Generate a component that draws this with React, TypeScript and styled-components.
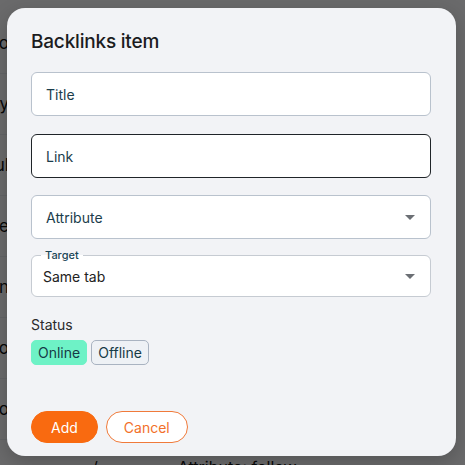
import React from "react";
import styled, { createGlobalStyle } from "styled-components";

const GlobalStyle = createGlobalStyle`
  html, body {
    margin: 0;
    padding: 0;
    width: 465px;
    height: 465px;
    overflow: hidden;
    font-family: Inter, "Noto Sans", Arial, sans-serif;
  }
`;

const bgRows = ["Informatio", "Category", "Consul", "Site", "Domain", "Status to", "Info"];

const App = () => {
  return (
    <>
      <GlobalStyle />
      <Page>
        <BgList>
          {bgRows.map((r) => (
            <BgRow key={r}>
              <BgText>{r}</BgText>
            </BgRow>
          ))}
          <BgFooter>
            <span>/</span>
            <span>Attribute: follow</span>
          </BgFooter>
        </BgList>
        <Overlay>
          <Dialog>
            <Heading>Backlinks item</Heading>
            <Field>
              <Box>
                <Value>Title</Value>
              </Box>
            </Field>
            <Field>
              <Box focused>
                <Value>Link</Value>
              </Box>
            </Field>
            <Field>
              <Box>
                <Value>Attribute</Value>
                <Caret />
              </Box>
            </Field>
            <Box outlined>
              <FloatLabel>Target</FloatLabel>
              <PlainValue>Same tab</PlainValue>
              <Caret />
            </Box>
            <StatusLabel>Status</StatusLabel>
            <Chips>
              <Chip active>Online</Chip>
              <Chip>Offline</Chip>
            </Chips>
            <Actions>
              <PrimaryButton>Add</PrimaryButton>
              <GhostButton>Cancel</GhostButton>
            </Actions>
          </Dialog>
        </Overlay>
      </Page>
    </>
  );
};

const Page = styled.div`
  position: relative;
  width: 465px;
  height: 465px;
  background: #f1f2f4;
  overflow: hidden;
`;

const BgList = styled.div`
  display: flex;
  flex-direction: column;
  padding-top: 13px;
`;

const BgRow = styled.div`
  display: flex;
  align-items: center;
  justify-content: flex-end;
  width: 9px;
  height: 60px;
  overflow: hidden;
  border-bottom: 1px solid #e2e4e8;
`;

const BgText = styled.span`
  font-size: 17px;
  color: #111;
  white-space: nowrap;
`;

const BgFooter = styled.div`
  display: flex;
  gap: 80px;
  padding: 17px 0 0 92px;
  font-size: 16px;
  color: #111;
`;

const Overlay = styled.div`
  position: absolute;
  inset: 0;
  background: rgba(0, 0, 0, 0.56);
  padding: 8px 9px 9px 7px;
  box-sizing: border-box;
`;

const Dialog = styled.div`
  width: 449px;
  height: 448px;
  box-sizing: border-box;
  background: #f2f3f6;
  border-radius: 18px;
  padding: 22px 25px 0 24px;
  display: flex;
  flex-direction: column;
  box-shadow: 0 6px 20px rgba(0, 0, 0, 0.2);
`;

const Heading = styled.h2`
  margin: 0 0 18px;
  font-size: 19px;
  line-height: 24px;
  font-weight: 500;
  color: #1c1c1e;
  letter-spacing: -0.2px;
`;

const Field = styled.div`
  margin-bottom: 17px;

  &:first-of-type {
    margin-bottom: 18px;
  }
`;

const Box = styled.div<{ focused?: boolean; outlined?: boolean }>`
  position: relative;
  height: ${(p) => (p.outlined ? "42px" : "44px")};
  margin-top: ${(p) => (p.outlined ? "-1px" : "0")};
  box-sizing: border-box;
  display: flex;
  align-items: center;
  padding: 0 ${(p) => (p.outlined ? "11px" : "14px")};
  background: #fff;
  border: 1px solid
    ${(p) => (p.focused ? "#1f2428" : p.outlined ? "#c6cbd2" : "#b9c2cd")};
  border-radius: 6px;
`;

const Value = styled.span`
  font-size: 14px;
  color: #1b3d4c;
`;

const PlainValue = styled.span`
  font-size: 14px;
  color: #222;
  margin-top: 1px;
`;

const FloatLabel = styled.span`
  position: absolute;
  left: 9px;
  top: -7px;
  padding: 0 4px;
  font-size: 11px;
  line-height: 12px;
  font-weight: 500;
  color: #1b4656;
  background: linear-gradient(#f2f3f6 50%, #fff 50%);
`;

const Caret = styled.span`
  position: absolute;
  right: 15px;
  top: 50%;
  margin-top: -2px;
  width: 0;
  height: 0;
  border-left: 5px solid transparent;
  border-right: 5px solid transparent;
  border-top: 5px solid #6b6f74;
`;

const StatusLabel = styled.div`
  margin-top: 19px;
  font-size: 14px;
  line-height: 18px;
  color: #2a2a2a;
`;

const Chips = styled.div`
  display: flex;
  gap: 4px;
  margin-top: 6px;
`;

const Chip = styled.span<{ active?: boolean }>`
  height: 25px;
  box-sizing: border-box;
  display: inline-flex;
  align-items: center;
  padding: 0 6px;
  font-size: 14px;
  border-radius: 5px;
  color: #163a46;
  background: ${(p) => (p.active ? "#6ef2c6" : "#eef1f5")};
  border: 1px solid ${(p) => (p.active ? "#6ef2c6" : "#a9b3c1")};
`;

const Actions = styled.div`
  display: flex;
  gap: 8px;
  margin-top: 46px;
`;

const PrimaryButton = styled.button`
  height: 32px;
  padding: 0 19px;
  border-radius: 16px;
  border: 1px solid #f96a10;
  background: #f96a10;
  color: #fff;
  font-family: inherit;
  font-size: 14px;
`;

const GhostButton = styled(PrimaryButton)`
  background: #fff;
  color: #f2702a;
  border-color: #f07a3a;
  padding: 0 17px;
`;

export default App;
